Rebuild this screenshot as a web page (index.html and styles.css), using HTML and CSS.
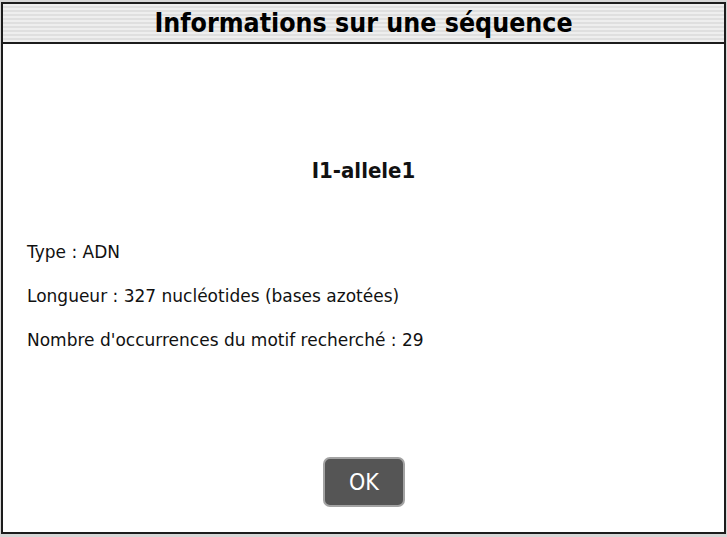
FILE: index.html
```html
<!DOCTYPE html>
<html lang="fr">
<head>
<meta charset="utf-8">
<title>Informations sur une séquence</title>
<link rel="stylesheet" href="styles.css">
</head>
<body>
<div class="window">
  <div class="titlebar">Informations sur une séquence</div>
  <div class="content">
    <h1 class="seq-name">I1-allele1</h1>
    <p class="info first">Type : ADN</p>
    <p class="info">Longueur : 327 nucléotides (bases azotées)</p>
    <p class="info">Nombre d'occurrences du motif recherché : 29</p>
    <div class="actions">
      <button class="ok-btn">OK</button>
    </div>
  </div>
</div>
</body>
</html>
```
FILE: styles.css
```css
html, body {
  margin: 0;
  padding: 0;
}
body {
  background: #d6d6d6;
  width: 727px;
  height: 537px;
  overflow: hidden;
  font-family: "DejaVu Sans", "Liberation Sans", sans-serif;
  color: #111;
}
.window {
  box-sizing: border-box;
  margin: 2px 1px 0 1px;
  width: 725px;
  height: 532px;
  border: 2px solid #1c1c1c;
  background: #fff;
  display: flex;
  flex-direction: column;
}
.titlebar {
  height: 38px;
  flex: none;
  border-bottom: 2px solid #1c1c1c;
  background: repeating-linear-gradient(to bottom, #eeeeee 0 2px, #dfdfdf 2px 4px);
  font-family: "DejaVu Sans Condensed", "DejaVu Sans", sans-serif;
  font-weight: bold;
  font-size: 26.5px;
  line-height: 38px;
  text-align: center;
  color: #000;
}
.content {
  flex: 1;
  display: flex;
  flex-direction: column;
  padding: 114px 0 25px 24px;
}
.seq-name {
  margin: 0 24px 0 0;
  font-family: "DejaVu Sans Condensed", "DejaVu Sans", sans-serif;
  font-weight: bold;
  font-size: 22px;
  line-height: 26px;
  text-align: center;
}
.info {
  margin: 24px 0 0 0;
  font-size: 17px;
  line-height: 20px;
}
.info.first {
  margin-top: 58px;
}
.actions {
  margin-top: auto;
  margin-right: 24px;
  display: flex;
  justify-content: center;
}
.ok-btn {
  box-sizing: border-box;
  width: 82px;
  height: 50px;
  margin-left: 1px;
  background: #555555;
  border: 2px solid #a3a3a3;
  border-radius: 7px;
  color: #fff;
  font-family: "DejaVu Sans Condensed", "DejaVu Sans", sans-serif;
  font-size: 23px;
  padding: 0;
}
```
